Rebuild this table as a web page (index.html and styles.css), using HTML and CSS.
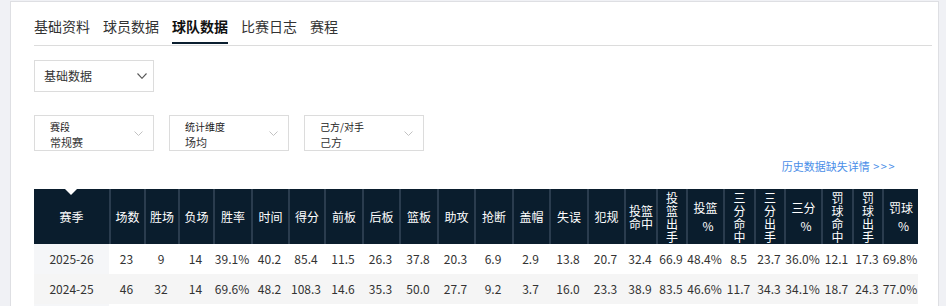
FILE: index.html
```html
<!DOCTYPE html>
<html lang="zh-CN">
<head>
<meta charset="utf-8">
<title>球队数据</title>
<link rel="stylesheet" href="styles.css">
</head>
<body>
<div class="card">
  <nav class="tabs">
    <a class="tab">基础资料</a>
    <a class="tab">球员数据</a>
    <a class="tab active">球队数据</a>
    <a class="tab">比赛日志</a>
    <a class="tab">赛程</a>
  </nav>

  <div class="select-main">
    <span>基础数据</span>
    <svg class="chev-dark" width="10" height="6" viewBox="0 0 10 6"><polyline points="0.5,0.5 5,5.3 9.5,0.5"/></svg>
  </div>

  <div class="filters">
    <div class="filter">
      <div class="ftext"><div class="flabel">赛段</div><div class="fvalue">常规赛</div></div>
      <svg class="chev-light" width="9" height="5" viewBox="0 0 9 5"><polyline points="0.5,0.5 4.5,4.5 8.5,0.5"/></svg>
    </div>
    <div class="filter">
      <div class="ftext"><div class="flabel">统计维度</div><div class="fvalue">场均</div></div>
      <svg class="chev-light" width="9" height="5" viewBox="0 0 9 5"><polyline points="0.5,0.5 4.5,4.5 8.5,0.5"/></svg>
    </div>
    <div class="filter">
      <div class="ftext"><div class="flabel">己方/对手</div><div class="fvalue">己方</div></div>
      <svg class="chev-light" width="9" height="5" viewBox="0 0 9 5"><polyline points="0.5,0.5 4.5,4.5 8.5,0.5"/></svg>
    </div>
  </div>

  <div class="link-row"><a class="link">历史数据缺失详情 <span class="arrows">&gt;&gt;&gt;</span></a></div>

  <table class="stats">
    <thead>
      <tr>
        <th class="season-h c75">赛季</th>
        <th class="c35">场数</th>
        <th class="c34">胜场</th>
        <th class="c35">负场</th>
        <th class="c38">胜率</th>
        <th class="c37">时间</th>
        <th class="c36">得分</th>
        <th class="c38">前板</th>
        <th class="c37">后板</th>
        <th class="c38">篮板</th>
        <th class="c37">助攻</th>
        <th class="c38">抢断</th>
        <th class="c37">盖帽</th>
        <th class="c38">失误</th>
        <th class="c37">犯规</th>
        <th class="c32">投篮命中</th>
        <th class="c30">投篮出手</th>
        <th class="c37"><span class="pl">投篮</span><span class="pl pct">%</span></th>
        <th class="c31">三分命中</th>
        <th class="c30">三分出手</th>
        <th class="c37"><span class="pl">三分</span><span class="pl pct">%</span></th>
        <th class="c31">罚球命中</th>
        <th class="c30">罚球出手</th>
        <th class="c36"><span class="pl">罚球</span><span class="pl pct">%</span></th>
      </tr>
    </thead>
    <tbody>
      <tr>
        <td class="season">2025-26</td>
        <td>23</td><td>9</td><td>14</td><td>39.1%</td><td>40.2</td><td>85.4</td>
        <td>11.5</td><td>26.3</td><td>37.8</td><td>20.3</td><td>6.9</td><td>2.9</td>
        <td>13.8</td><td>20.7</td><td>32.4</td><td>66.9</td><td>48.4%</td><td>8.5</td>
        <td>23.7</td><td>36.0%</td><td>12.1</td><td>17.3</td><td>69.8%</td>
      </tr>
      <tr class="alt">
        <td class="season">2024-25</td>
        <td>46</td><td>32</td><td>14</td><td>69.6%</td><td>48.2</td><td>108.3</td>
        <td>14.6</td><td>35.3</td><td>50.0</td><td>27.7</td><td>9.2</td><td>3.7</td>
        <td>16.0</td><td>23.3</td><td>38.9</td><td>83.5</td><td>46.6%</td><td>11.7</td>
        <td>34.3</td><td>34.1%</td><td>18.7</td><td>24.3</td><td>77.0%</td>
      </tr>
      <tr class="next">
        <td class="season"></td>
        <td></td><td></td><td></td><td></td><td></td><td></td>
        <td></td><td></td><td></td><td></td><td></td><td></td>
        <td></td><td></td><td></td><td></td><td></td><td></td>
        <td></td><td></td><td></td><td></td><td></td><td></td>
      </tr>
    </tbody>
  </table>
</div>
</body>
</html>
```

FILE: styles.css
```css
* {
  box-sizing: border-box;
}

html, body {
  margin: 0;
  height: 100%;
  overflow: hidden;
}

body {
  padding: 1px 7px 0 10px;
  background: #f0f1f5;
  font-family: "Noto Sans CJK SC", "Noto Sans", sans-serif;
  color: #333;
}

.card {
  background: #fff;
  border: 1px solid #dedfe3;
  padding: 0 6px 0 23px;
  min-height: 400px;
}

/* Tabs */
.tabs {
  display: flex;
  border-bottom: 1px solid #dcdcdc;
  padding-bottom: 1px;
}

.tab {
  display: block;
  margin-right: 13px;
  padding: 14px 0 6px;
  font-size: 14px;
  line-height: 20px;
  color: #333;
  border-bottom: 2px solid transparent;
}

.tab.active {
  color: #111;
  font-weight: bold;
  border-bottom-color: #0b1f30;
}

/* Main select */
.select-main {
  margin-top: 14px;
  width: 120px;
  height: 32px;
  border: 1px solid #dcdcdc;
  display: flex;
  align-items: center;
  justify-content: space-between;
  padding: 0 6px 0 9px;
  font-size: 12px;
  line-height: 18px;
  color: #333;
}

.chev-dark polyline {
  fill: none;
  stroke: #555;
  stroke-width: 1.1;
}

.chev-light polyline {
  fill: none;
  stroke: #c2c2c2;
  stroke-width: 1;
}

/* Filters */
.filters {
  margin-top: 23px;
  display: flex;
  gap: 15px;
}

.filter {
  width: 120px;
  height: 36px;
  border: 1px solid #dcdcdc;
  display: flex;
  align-items: center;
  justify-content: space-between;
  padding: 0 10px 0 15px;
}

.ftext {
  align-self: flex-start;
  margin-top: 3px;
}

.flabel {
  font-size: 10px;
  line-height: 15px;
  color: #222;
}

.fvalue {
  font-size: 11px;
  line-height: 16px;
  color: #333;
}

/* Link */
.link-row {
  margin-top: 7px;
  text-align: right;
  padding-right: 36px;
  font-size: 11px;
  line-height: 17px;
}

.link {
  color: #4a8ee8;
}

.arrows {
  letter-spacing: 1.5px;
  margin-left: 1px;
}

/* Table */
.stats {
  margin-top: 14px;
  width: 884px;
  table-layout: fixed;
  border-collapse: separate;
  border-spacing: 0;
  font-size: 12px;
}

.stats th {
  height: 55px;
  padding: 0 3px;
  background: #0a1d2d;
  color: #fff;
  font-weight: normal;
  line-height: 13px;
  text-align: center;
  vertical-align: middle;
}

.stats th + th {
  border-left: 2px solid #2a3c4e;
}

.pl {
  display: block;
  line-height: 17.5px;
}

.pct {
  padding-left: 5px;
}

.season-h {
  position: relative;
}

.season-h::before {
  content: "";
  position: absolute;
  top: 0;
  left: 31px;
  border-left: 6px solid transparent;
  border-right: 6px solid transparent;
  border-top: 6px solid #fff;
}

.c75 { width: 75px; }
.c38 { width: 38px; }
.c37 { width: 37px; }
.c36 { width: 36px; }
.c35 { width: 35px; }
.c34 { width: 34px; }
.c32 { width: 32px; }
.c31 { width: 31px; }
.c30 { width: 30px; }

.stats td {
  height: 30px;
  padding: 0;
  text-align: center;
  white-space: nowrap;
  color: #333;
  line-height: 16px;
  background: #fff;
}

.stats tr.alt td {
  background: #f5f5f5;
}

.stats td.season {
  background: #f5f6f8;
}
```
